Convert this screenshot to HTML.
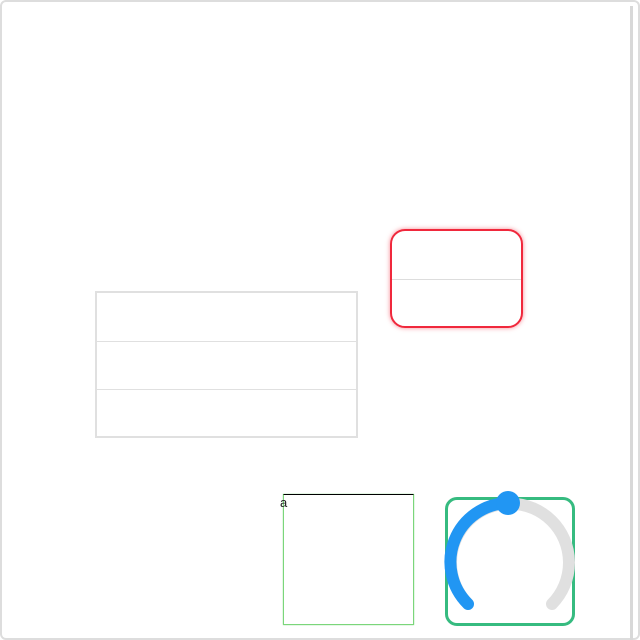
<!DOCTYPE html>
<html><head><style>
html,body{margin:0;padding:0;background:#fff;width:640px;height:640px;overflow:hidden;font-family:"Liberation Sans",sans-serif}
.frame{position:absolute;left:0;top:0;width:636px;height:636px;border:2px solid #ddd;border-radius:6px}
.sb{position:absolute;left:630px;top:6px;width:3px;height:634px;background:#d8d8d8}
.tbl{position:absolute;left:95px;top:291px;width:259px;height:143px;border:2px solid #e0e0e0}
.tbl div{position:absolute;left:0;right:0;height:1px;background:#e0e0e0}
.red{position:absolute;left:390px;top:229px;width:129px;height:95px;border:2px solid #f0283c;border-radius:15px;box-shadow:0 0 5px rgba(240,40,60,.55)}
.red div{position:absolute;left:0;right:0;top:48px;height:1px;background:#ddd}
.lime{position:absolute;left:283px;top:494px;width:129px;height:129px;border:1px solid #7bd67b;border-top:1px solid #000;box-shadow:0 0 1px #7bd67b}
.a{position:absolute;left:280px;top:495px;font-size:13px;color:#222}
.knob{position:absolute;left:445px;top:497px;width:124px;height:123px;border:3px solid #36bb80;border-radius:12px}
</style></head><body>
<div class="frame"></div><div class="sb"></div>
<div class="tbl"><div style="top:48px"></div><div style="top:96px"></div></div>
<div class="red"><div></div></div>
<div class="lime"></div><div class="a">a</div>
<div class="knob"></div>
<svg style="position:absolute;left:0;top:0" width="640" height="640">
<path d="M468 604 A59 59 0 1 1 552 604" fill="none" stroke="#e0e0e0" stroke-width="12" stroke-linecap="round"/>
<path d="M468 604 A59 59 0 0 1 508 503" fill="none" stroke="#2196f3" stroke-width="12" stroke-linecap="round"/>
<circle cx="508" cy="503" r="12" fill="#2196f3"/>
</svg>
</body></html>
